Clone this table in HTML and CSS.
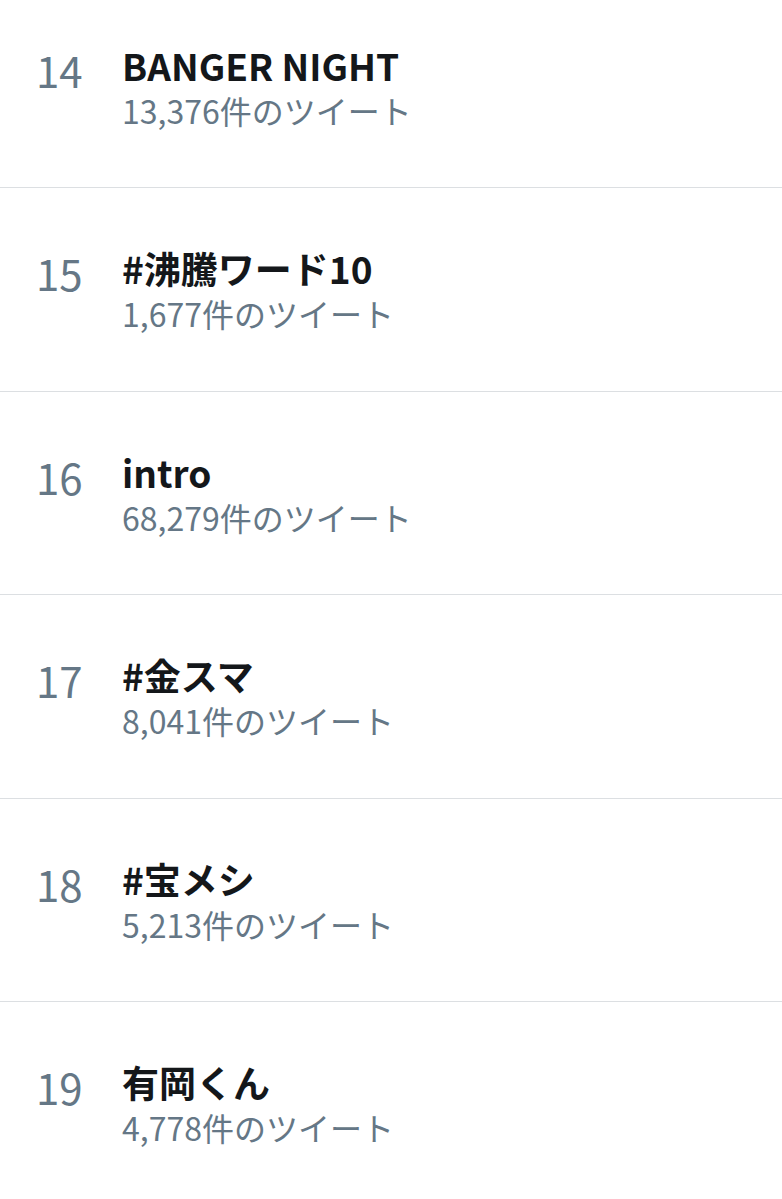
FILE: index.html
```html
<!DOCTYPE html>
<html lang="ja">
<head>
<meta charset="utf-8">
<link rel="stylesheet" href="styles.css">
</head>
<body>
<ol class="trends">
  <li class="trend"><span class="rank">14</span><div class="info"><div class="title">BANGER NIGHT</div><div class="count">13,376件のツイート</div></div></li>
  <li class="trend"><span class="rank">15</span><div class="info"><div class="title">#沸騰ワード10</div><div class="count">1,677件のツイート</div></div></li>
  <li class="trend"><span class="rank">16</span><div class="info"><div class="title">intro</div><div class="count">68,279件のツイート</div></div></li>
  <li class="trend"><span class="rank">17</span><div class="info"><div class="title">#金スマ</div><div class="count">8,041件のツイート</div></div></li>
  <li class="trend"><span class="rank">18</span><div class="info"><div class="title">#宝メシ</div><div class="count">5,213件のツイート</div></div></li>
  <li class="trend"><span class="rank">19</span><div class="info"><div class="title">有岡くん</div><div class="count">4,778件のツイート</div></div></li>
</ol>
</body>
</html>
```
FILE: styles.css
```css
html, body {
  margin: 0;
  padding: 0;
  background: #ffffff;
  overflow: hidden;
}
body {
  font-family: "Noto Sans CJK JP", "Noto Sans", sans-serif;
}
.trends {
  list-style: none;
  margin: -15.5px 0 0 0;
  padding: 0;
}
.trend {
  display: flex;
  align-items: flex-start;
  box-sizing: border-box;
  height: 203.5px;
  padding: 58px 0 0 36px;
  border-bottom: 1px solid #dcdfe2;
}
.rank {
  width: 86px;
  flex: none;
  font-size: 42px;
  line-height: 50px;
  margin-top: 2px;
  color: #657786;
}
.title {
  font-size: 37px;
  line-height: 44px;
  font-weight: 700;
  color: #14171a;
}
.count {
  margin-top: 3px;
  font-size: 32px;
  line-height: 40px;
  color: #657786;
}
```
